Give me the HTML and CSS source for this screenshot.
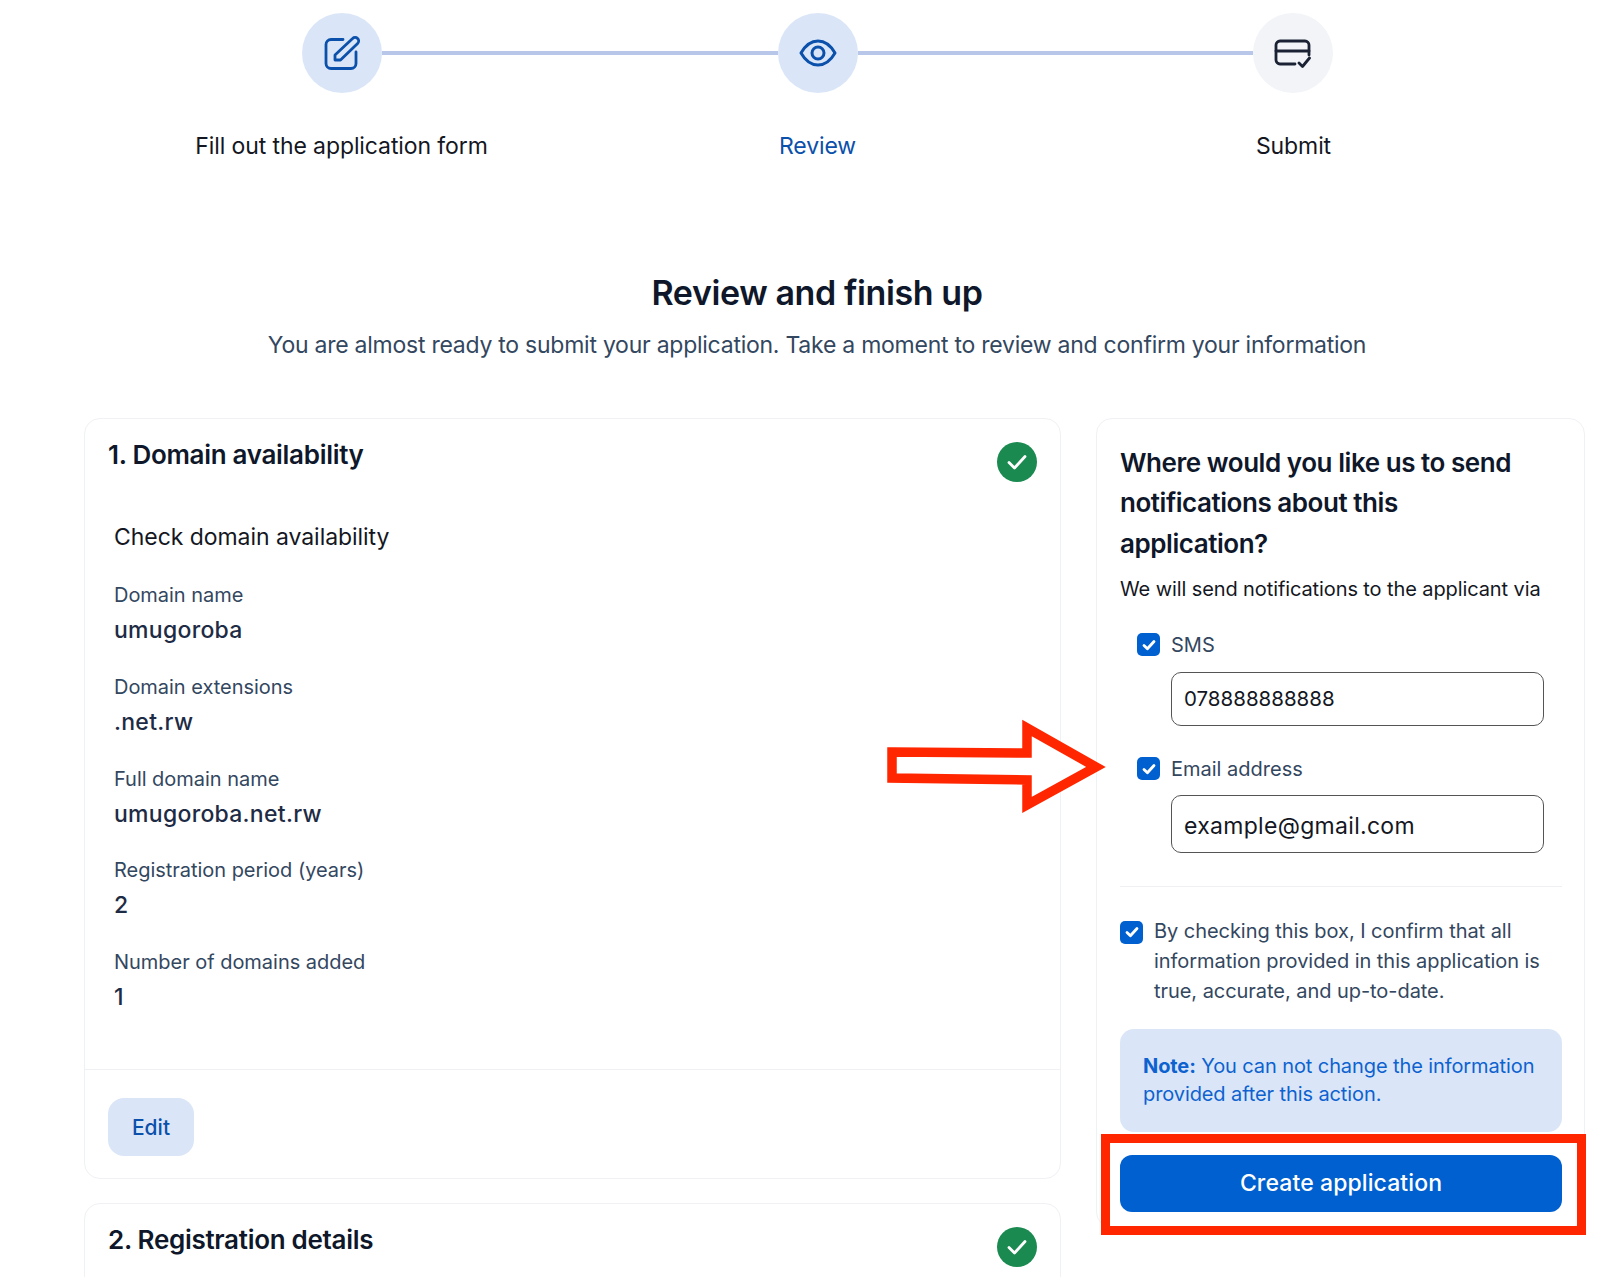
FILE: index.html
```html
<!DOCTYPE html>
<html lang="en">
<head>
  <meta charset="UTF-8">
  <meta name="viewport" content="width=device-width, initial-scale=1.0">
  <title>Review and finish up</title>
  <link rel="stylesheet" href="styles.css">
</head>
<body>
<div class="page">
  <div class="step-track">
    <div class="step-circle">
      <svg width="36" height="36" viewBox="0 0 36 36" fill="none" stroke="#0b50ab" stroke-width="2.8" stroke-linecap="round" stroke-linejoin="round">
        <path d="M19 4.500H7a5 5 0 0 0-5 5v19a5 5 0 0 0 5 5h20a5 5 0 0 0 5-5V17"/>
        <path d="M11 25h5.500L33.600 8.400a3.400 3.400 0 0 0-5-5L11 20z"/>
      </svg>
    </div>
    <div class="step-line"></div>
    <div class="step-circle">
      <svg width="38" height="28" viewBox="0 0 38 28" fill="none" stroke="#0b50ab" stroke-width="3">
        <path d="M2 14C6 7 12 2 19 2s13 5 17 12c-4 7-10 12-17 12S6 21 2 14z" stroke-linejoin="round"/>
        <circle cx="19" cy="14" r="6"/>
      </svg>
    </div>
    <div class="step-line"></div>
    <div class="step-circle step-todo">
      <svg width="38" height="30" viewBox="0 0 38 30" fill="none" stroke="#1a2233" stroke-width="2.800" stroke-linecap="round" stroke-linejoin="round">
        <path d="M21 26H6a4 4 0 0 1-4-4V7a4 4 0 0 1 4-4h25a4 4 0 0 1 4 4v10"/>
        <path d="M2 13h33"/>
        <path d="M25 25l3.500 3.500L35.500 20"/>
      </svg>
    </div>
  </div>
  <div class="step-labels">
    <span>Fill out the application form</span>
    <span class="current">Review</span>
    <span>Submit</span>
  </div>

  <div class="intro">
    <h1>Review and finish up</h1>
    <p>You are almost ready to submit your application. Take a moment to review and confirm your information</p>
  </div>

  <div class="columns">
    <div class="left-col">
      <section class="card">
        <div class="card-head">
          <h2>1. Domain availability</h2>
          <span class="done">
            <svg width="22" height="22" viewBox="0 0 22 22" fill="none" stroke="#fff" stroke-width="2.800" stroke-linecap="round" stroke-linejoin="round"><path d="M3 11.500l5.500 5.500L19 5.500"/></svg>
          </span>
        </div>
        <div class="details">
          <h3>Check domain availability</h3>
          <div class="field"><label>Domain name</label><strong>umugoroba</strong></div>
          <div class="field"><label>Domain extensions</label><strong>.net.rw</strong></div>
          <div class="field"><label>Full domain name</label><strong>umugoroba.net.rw</strong></div>
          <div class="field"><label>Registration period (years)</label><strong>2</strong></div>
          <div class="field"><label>Number of domains added</label><strong>1</strong></div>
        </div>
        <div class="card-foot">
          <button class="edit-btn">Edit</button>
        </div>
      </section>
      <section class="card card-open">
        <div class="card-head">
          <h2>2. Registration details</h2>
          <span class="done">
            <svg width="22" height="22" viewBox="0 0 22 22" fill="none" stroke="#fff" stroke-width="2.800" stroke-linecap="round" stroke-linejoin="round"><path d="M3 11.500l5.500 5.500L19 5.500"/></svg>
          </span>
        </div>
      </section>
    </div>

    <aside class="card side">
      <h2 class="side-title">Where would you like us to send notifications about this application?</h2>
      <p class="side-sub">We will send notifications to the applicant via</p>

      <div class="option">
        <span class="check"><svg width="14" height="14" viewBox="0 0 14 14" fill="none" stroke="#fff" stroke-width="2.800" stroke-linecap="round" stroke-linejoin="round"><path d="M2 7.500l3.400 3.300L12 3.500"/></svg></span>
        <span>SMS</span>
      </div>
      <input class="text-input phone" type="text" value="078888888888">

      <div class="option option-email">
        <span class="check"><svg width="14" height="14" viewBox="0 0 14 14" fill="none" stroke="#fff" stroke-width="2.800" stroke-linecap="round" stroke-linejoin="round"><path d="M2 7.500l3.400 3.300L12 3.500"/></svg></span>
        <span>Email address</span>
      </div>
      <input class="text-input email" type="text" value="example@gmail.com">

      <hr class="divider">

      <div class="confirm">
        <span class="check"><svg width="14" height="14" viewBox="0 0 14 14" fill="none" stroke="#fff" stroke-width="2.800" stroke-linecap="round" stroke-linejoin="round"><path d="M2 7.500l3.400 3.300L12 3.500"/></svg></span>
        <p>By checking this box, I confirm that all information provided in this application is true, accurate, and up-to-date.</p>
      </div>

      <div class="note"><b>Note:</b> You can not change the information provided after this action.</div>

      <button class="create-btn">Create application</button>
    </aside>
  </div>

  <!-- red annotations on top of the screenshot -->
  <svg class="mark-arrow" width="240" height="110" viewBox="0 0 240 110">
    <path d="M10 38L145 39V14L214 53L145 91V66L10 64Z" fill="#fff" stroke="#ff2600" stroke-width="9.500"/>
  </svg>
  <div class="mark-box"></div>
</div>
</body>
</html>
```

FILE: styles.css
```css
* {
  box-sizing: border-box;
}

html, body {
  margin: 0;
  padding: 0;
  background: #fff;
}

body {
  font-family: 'Inter', 'Liberation Sans', sans-serif;
  color: #111827;
}

.page {
  position: relative;
  width: 1600px;
  height: 1277px;
  padding-top: 13px;
  overflow: hidden;
}

/* stepper */
.step-track {
  display: flex;
  align-items: center;
  width: 1031px;
  margin-left: 302px;
}

.step-circle {
  flex: none;
  width: 80px;
  height: 80px;
  border-radius: 50%;
  background: #dae6f7;
  display: flex;
  align-items: center;
  justify-content: center;
}

.step-todo {
  background: #f2f4f8;
}

.step-line {
  flex: 1;
  height: 4px;
  background: #b8c6ea;
}

.step-labels {
  display: grid;
  grid-template-columns: repeat(3, 476px);
  margin: 38px 0 0 103.500px;
  font-size: 23px;
  line-height: 30px;
  letter-spacing: -0.1px;
  text-align: center;
  color: #14171f;
}

.step-labels .current {
  color: #0b50ab;
}

/* heading */
.intro {
  width: 1600px;
  padding-left: 34px;
  margin-top: 110px;
  text-align: center;
}

.intro h1 {
  margin: 0;
  font-size: 34px;
  line-height: 44px;
  font-weight: 600;
  letter-spacing: -0.4px;
  color: #0f172a;
}

.intro p {
  margin: 14px 0 0;
  font-size: 23px;
  line-height: 32px;
  letter-spacing: -0.25px;
  color: #33475f;
}

/* columns */
.columns {
  display: grid;
  grid-template-columns: 977px 489px;
  gap: 35px;
  margin: 57px 0 0 84px;
  align-items: start;
}

.left-col {
  display: flex;
  flex-direction: column;
  gap: 24px;
}

.card {
  border: 1px solid #f0f1f4;
  border-radius: 16px;
  background: #fff;
}

.card-open {
  min-height: 140px;
}

.card-head {
  display: flex;
  justify-content: space-between;
  align-items: flex-start;
  padding: 19px 23px 0 23px;
}

.card h2 {
  margin: 0;
  font-size: 26px;
  line-height: 34px;
  font-weight: 600;
  letter-spacing: -0.3px;
  color: #0f172a;
}

.done {
  width: 40px;
  height: 40px;
  margin-top: 4px;
  border-radius: 50%;
  background: #1a8a50;
  display: flex;
  align-items: center;
  justify-content: center;
}

.details {
  margin-top: 39px;
  padding-left: 29px;
}

.details h3 {
  margin: 0 0 28px;
  font-size: 23px;
  line-height: 32px;
  font-weight: 400;
  letter-spacing: -0.05px;
  color: #14171f;
}

.field {
  margin-bottom: 26.800px;
}

.field label {
  display: block;
  font-size: 20px;
  line-height: 28px;
  letter-spacing: -0.03px;
  color: #33475f;
}

.field strong {
  display: block;
  margin-top: 5px;
  font-size: 23px;
  line-height: 32px;
  font-weight: 500;
  letter-spacing: 0.28px;
  color: #1e2b45;
}

.card-foot {
  margin-top: 56px;
  padding: 28px 23px 22px;
  border-top: 1px solid #eef0f3;
}

.edit-btn {
  display: block;
  width: 86px;
  height: 58px;
  padding-top: 2px;
  border: none;
  border-radius: 16px;
  background: #dae6f7;
  color: #0b50ab;
  font-family: inherit;
  font-size: 21px;
  font-weight: 500;
}

/* notifications card */
.side {
  padding: 24px 22px 15px 23px;
}

.card .side-title {
  max-width: 420px;
  font-size: 26px;
  line-height: 40.300px;
  letter-spacing: -0.45px;
}

.side-sub {
  margin: 10px 0 0;
  font-size: 20px;
  line-height: 30px;
  letter-spacing: -0.1px;
  color: #14171f;
}

.option {
  display: flex;
  align-items: center;
  gap: 11px;
  height: 22px;
  margin: 30px 0 0 17px;
  font-size: 20px;
  letter-spacing: 0;
  color: #33475f;
}

.option-email {
  margin-top: 32px;
}

.check {
  flex: none;
  width: 23px;
  height: 23px;
  border-radius: 5px;
  background: #0060cf;
  display: flex;
  align-items: center;
  justify-content: center;
}

.text-input {
  display: block;
  width: 373px;
  margin-left: 51px;
  padding: 0 12px;
  border: 1px solid #555;
  border-radius: 10px;
  font-family: inherit;
  color: #14171f;
  outline: none;
}

.phone {
  height: 54px;
  margin-top: 16px;
  font-size: 20.500px;
}

.email {
  height: 58px;
  margin-top: 15px;
  padding-top: 4px;
  font-size: 23px;
  letter-spacing: 0.3px;
}

.divider {
  margin: 33px 0 0;
  border: none;
  border-top: 1px solid #eef0f3;
}

.confirm {
  display: flex;
  gap: 11px;
  margin-top: 29px;
}

.confirm .check {
  margin-top: 5px;
}

.confirm p {
  margin: 0;
  font-size: 20px;
  line-height: 30px;
  letter-spacing: -0.05px;
  color: #33475f;
}

.note {
  margin-top: 23px;
  padding: 23px 22px 23px 23px;
  border-radius: 14px;
  background: #dae6f7;
  color: #0d62d0;
  font-size: 20px;
  line-height: 28.500px;
  letter-spacing: -0.1px;
}

.note b {
  font-weight: 700;
}

.create-btn {
  display: block;
  width: 100%;
  height: 57px;
  margin-top: 23px;
  border: none;
  border-radius: 12px;
  background: #0060cf;
  color: #fff;
  font-family: inherit;
  font-size: 23px;
  font-weight: 500;
  letter-spacing: 0.1px;
}

/* annotations */
.mark-arrow {
  position: absolute;
  left: 882px;
  top: 714px;
}

.mark-box {
  position: absolute;
  left: 1101px;
  top: 1134px;
  width: 485px;
  height: 101px;
  border: 9.500px solid #ff2600;
}
```
